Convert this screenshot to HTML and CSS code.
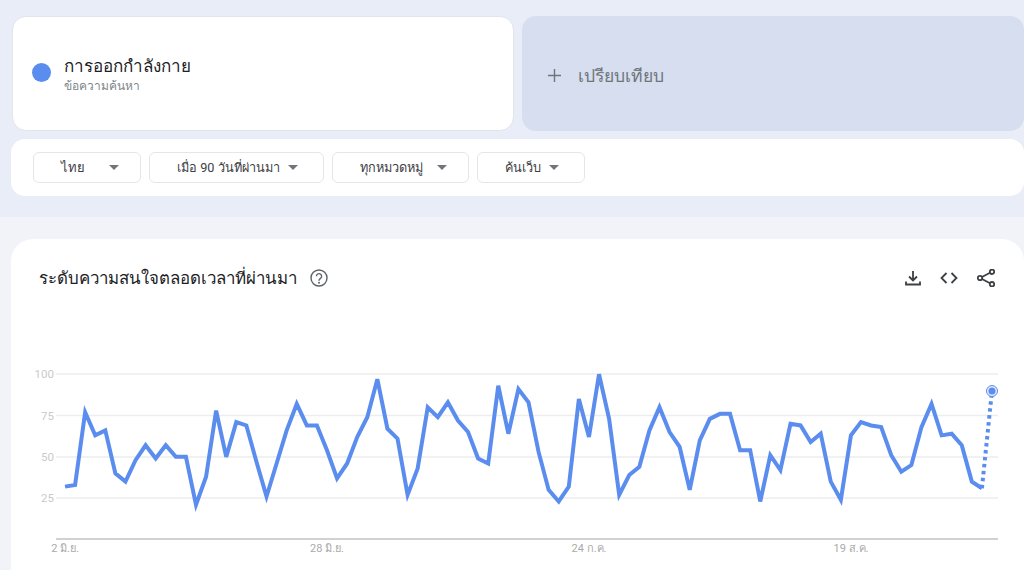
FILE: index.html
```html
<!DOCTYPE html>
<html lang="th">
<head>
    <meta charset="UTF-8">
    <title>Google Trends - การออกกำลังกาย</title>
    <link rel="stylesheet" href="styles.css">
</head>
<body>
    <header class="top">
        <div class="terms">
            <div class="term">
                <span class="dot"></span>
                <div>
                    <div class="term-name">การออกกำลังกาย</div>
                    <div class="term-type">ข้อความค้นหา</div>
                </div>
            </div>
            <div class="compare">
                <svg class="plus" viewBox="0 0 14 14"><path d="M7 0v14M0 7h14"/></svg>
                <span>เปรียบเทียบ</span>
            </div>
        </div>
        <div class="filters">
            <div class="chip chip-lang"><span>ไทย</span><i class="caret"></i></div>
            <div class="chip chip-time"><span>เมื่อ 90 วันที่ผ่านมา</span><i class="caret"></i></div>
            <div class="chip chip-cat"><span>ทุกหมวดหมู่</span><i class="caret"></i></div>
            <div class="chip chip-type"><span>ค้นเว็บ</span><i class="caret"></i></div>
        </div>
    </header>

    <main class="card">
        <div class="card-head">
            <h2>ระดับความสนใจตลอดเวลาที่ผ่านมา</h2>
            <svg class="help" viewBox="0 0 18 18">
                <circle cx="9" cy="9" r="8"/>
                <path d="M6.400 7.200a2.600 2.600 0 1 1 4.300 2c-1 .8-1.700 1.200-1.700 2.600"/>
                <circle class="help-dot" cx="9" cy="13.800" r="1"/>
            </svg>
            <div class="actions">
                <svg class="icon-download" viewBox="0 0 16 16"><path d="M8 1v9.500M4 6.500l4 4 4-4M1 11.500v3h14v-3"/></svg>
                <svg class="icon-code" viewBox="0 0 18 12"><path d="M6.500 1 1.500 6l5 5M11.500 1l5 5-5 5"/></svg>
                <svg class="icon-share" viewBox="0 0 18 18"><circle cx="3" cy="9" r="2.200"/><circle cx="15" cy="2.800" r="2.200"/><circle cx="15" cy="15.200" r="2.200"/><path d="M5 8 13 3.800M5 10l8 4.200"/></svg>
            </div>
        </div>

        <svg class="chart" viewBox="11 320 1013 250">
            <g class="grid">
                <path d="M56 374H998M56 415.500H998M56 457H998M56 498H998"/>
            </g>
            <path class="axis" d="M56 539H998"/>
            <g class="y-labels">
                <text x="54" y="378">100</text>
                <text x="54" y="420">75</text>
                <text x="54" y="461">50</text>
                <text x="54" y="502">25</text>
            </g>
            <g class="x-labels">
                <text x="65" y="552">2 มิ.ย.</text>
                <text x="327" y="552">28 มิ.ย.</text>
                <text x="589" y="552">24 ก.ค.</text>
                <text x="851" y="552">19 ส.ค.</text>
            </g>
            <!-- x = day index, y = interest value -->
            <g transform="translate(65 539.500) scale(10.076 -1.653)">
                <polyline class="line" points="0,32 1,33 2,77 3,63 4,66 5,40 6,35 7,48 8,57 9,49 10,57 11,50 12,50 13,21 14,38 15,78 16,50 17,71 18,69 19,47 20,26 21,46 22,66 23,82 24,69 25,69 26,54 27,37 28,46 29,62 30,74 31,97 32,67 33,61 34,27 35,43 36,80 37,74 38,83 39,72 40,65 41,49 42,46 43,93 44,64 45,91 46,83 47,53 48,30 49,23 50,32 51,85 52,62 53,100 54,73 55,27 56,39 57,44 58,66 59,80 60,65 61,56 62,30 63,60 64,73 65,76 66,76 67,54 68,54 69,23 70,51 71,42 72,70 73,69 74,59 75,64 76,35 77,24 78,63 79,71 80,69 81,68 82,51 83,41 84,45 85,68 86,82 87,63 88,64 89,57 90,35 91,31"/>
                <polyline class="line line-partial" points="91,31 92,90"/>
            </g>
            <circle class="last-ring" cx="992" cy="391" r="5.500"/>
            <circle class="last-dot" cx="992" cy="391" r="3.500"/>
        </svg>
    </main>
</body>
</html>
```

FILE: styles.css
```css
html, body {
    margin: 0;
    height: 570px;
    overflow: hidden;
}
body {
    background: #f1f3f8;
    font-family: Roboto, "Noto Sans", sans-serif;
    color: #202124;
}
.top {
    height: 217px;
    background: #e9edf7;
    padding: 16px 0 0 11px;
    box-sizing: border-box;
}
.terms {
    display: grid;
    grid-template-columns: 1fr 1fr;
    gap: 8px;
    height: 115px;
    margin-left: 1px;
}
.term, .compare {
    display: flex;
    align-items: center;
    box-sizing: border-box;
    border-radius: 14px;
}
.term {
    background: #fff;
    border: 1px solid #e2e5ee;
    padding: 4px 0 0 19px;
    gap: 13px;
}
.dot {
    width: 19px;
    height: 19px;
    border-radius: 50%;
    margin-top: -7px;
    background: #5b8def;
}
.term-name {
    font-size: 17px;
    line-height: 22px;
}
.term-type {
    font-size: 12px;
    line-height: 19px;
    color: #80868b;
}
.compare {
    background: #d6def0;
    padding: 4px 0 0 26px;
    gap: 17px;
    font-size: 17.500px;
    color: #70757a;
}
.plus {
    width: 13px;
    height: 13px;
    fill: none;
    stroke: #70757a;
    stroke-width: 1.500;
}
.filters {
    display: flex;
    gap: 8px;
    margin-top: 8px;
    height: 57px;
    align-items: center;
    background: #fff;
    border-radius: 14px;
    padding-left: 22px;
}
.chip {
    display: flex;
    align-items: center;
    justify-content: space-between;
    box-sizing: border-box;
    height: 31px;
    border: 1px solid #e4e6ea;
    border-radius: 6px;
    padding: 0 22px 0 27px;
    font-size: 12.700px;
    color: #3c4043;
}
.chip-lang { width: 108px; font-size: 13px; padding-right: 21px; }
.chip-time { width: 175px; padding-right: 25px; }
.chip-cat { width: 137px; padding-right: 21px; }
.chip-type { width: 108px; padding-right: 25px; }
.caret {
    border-left: 5px solid transparent;
    border-right: 5px solid transparent;
    border-top: 5px solid #70757a;
}
.card {
    display: block;
    height: 331px;
    margin: 22px 0 0 11px;
    background: #fff;
    border-radius: 22px 22px 0 0;
}
.card-head {
    display: flex;
    align-items: center;
    height: 81px;
    box-sizing: border-box;
    padding: 0 29px 4px 28px;
}
.card-head h2 {
    margin: 0;
    font-size: 16.850px;
    font-weight: 400;
}
.help {
    width: 18px;
    height: 18px;
    margin-left: 13px;
    fill: none;
    stroke: #5f6368;
    stroke-width: 1.400;
}
.help-dot {
    fill: #5f6368;
    stroke: none;
}
.actions {
    margin-left: auto;
    display: flex;
    align-items: center;
    gap: 19px;
}
.actions svg {
    fill: none;
    stroke: #3c4043;
    stroke-width: 1.800;
    display: block;
}
.icon-download {
    width: 16px;
    height: 16px;
}
.icon-code {
    width: 18px;
    height: 12px;
}
.icon-share {
    width: 18px;
    height: 18px;
}
.chart {
    display: block;
    width: 1013px;
    height: 250px;
}
.grid path {
    stroke: #ededed;
    stroke-width: 1.500;
    fill: none;
}
.axis {
    stroke: #c2c2c2;
    stroke-width: 1.500;
    fill: none;
}
.y-labels text {
    font-size: 11.500px;
    fill: #cacaca;
    text-anchor: end;
}
.x-labels text {
    font-size: 11px;
    fill: #aaaaaa;
    text-anchor: middle;
}
.line {
    fill: none;
    stroke: #5b8def;
    stroke-width: 4;
    stroke-linejoin: miter;
    vector-effect: non-scaling-stroke;
}
.line-partial {
    stroke-dasharray: 3.500 3.500;
}
.last-ring {
    fill: #e3ebfc;
    stroke: #5b8def;
    stroke-width: 1;
}
.last-dot {
    fill: #5b8def;
}
```
